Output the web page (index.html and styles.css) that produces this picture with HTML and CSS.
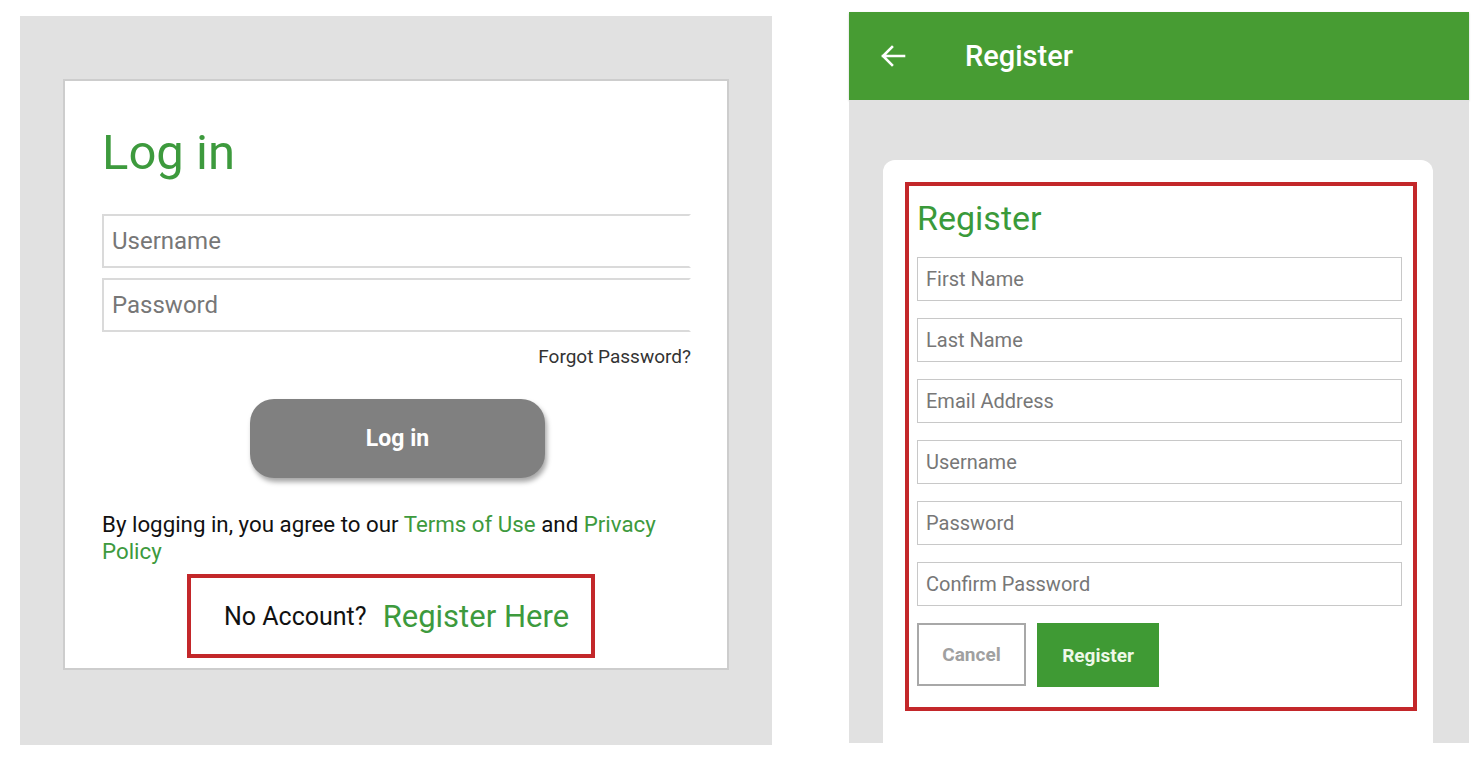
FILE: index.html
```html
<!DOCTYPE html>
<html lang="en">
<head>
<meta charset="utf-8">
<title>Log in / Register</title>
<link rel="stylesheet" href="styles.css">
</head>
<body>
<div class="page">
  <section class="login-panel">
    <div class="login-card">
      <h1 class="login-title">Log in</h1>
      <div class="login-fields">
        <div class="login-input">Username</div>
        <div class="login-input">Password</div>
      </div>
      <div class="forgot">Forgot Password?</div>
      <div class="login-btn-row"><div class="login-btn">Log in</div></div>
      <p class="terms">By logging in, you agree to our <span class="green">Terms of Use</span> and <span class="green">Privacy</span> <span class="green">Policy</span></p>
      <div class="no-account">
        <span class="no-account-q">No Account?</span>
        <span class="register-here">Register Here</span>
      </div>
    </div>
  </section>

  <section class="register-panel">
    <header class="appbar">
      <svg class="back" width="26" height="24" viewBox="0 0 26 24" aria-hidden="true">
        <path d="M24 12H3 M12 3 L3 12 L12 21" fill="none" stroke="#ffffff" stroke-width="2.6" stroke-linecap="square" stroke-linejoin="miter"/>
      </svg>
      <span class="appbar-title">Register</span>
    </header>
    <div class="register-body">
      <div class="register-card">
        <div class="register-box">
          <h2 class="register-title">Register</h2>
          <div class="reg-fields">
            <div class="reg-input">First Name</div>
            <div class="reg-input">Last Name</div>
            <div class="reg-input">Email Address</div>
            <div class="reg-input">Username</div>
            <div class="reg-input">Password</div>
            <div class="reg-input">Confirm Password</div>
          </div>
          <div class="reg-actions">
            <div class="btn-cancel">Cancel</div>
            <div class="btn-register">Register</div>
          </div>
        </div>
      </div>
    </div>
  </section>
</div>
</body>
</html>
```

FILE: styles.css
```css
* { box-sizing: border-box; }
html, body { margin: 0; padding: 0; background: #ffffff; }
body { font-family: Roboto, "Liberation Sans", sans-serif; color: #222; }

.page {
  display: flex;
  align-items: flex-start;
  width: 1482px;
  height: 768px;
}

/* ---------- Left: Log in ---------- */
.login-panel {
  margin: 16px 0 0 20px;
  width: 752px;
  height: 729px;
  background: #e1e1e1;
  padding: 63px 0 0 43px;
}
.login-card {
  width: 666px;
  height: 591px;
  background: #fff;
  border: 2px solid #cdcdcd;
  padding: 0 36px 0 37px;
  display: flex;
  flex-direction: column;
}
.login-title {
  margin: 42px 0 0 0;
  font-size: 49px;
  line-height: 60px;
  font-weight: 400;
  color: #3d9a3d;
}
.login-fields {
  margin-top: 31px;
  display: flex;
  flex-direction: column;
  gap: 10px;
}
.login-input {
  height: 54px;
  border: 2px solid #dadada;
  border-right-color: transparent;
  padding-left: 8px;
  display: flex;
  align-items: center;
  font-size: 24px;
  color: #777;
}
.forgot {
  margin-top: 15px;
  text-align: right;
  font-size: 19px;
  line-height: 20px;
  color: #333;
}
.login-btn-row {
  margin-top: 32px;
  display: flex;
  padding-left: 148px;
}
.login-btn {
  width: 295px;
  height: 79px;
  border-radius: 24px;
  background: #808080;
  box-shadow: 2px 4px 5px rgba(0,0,0,0.35);
  color: #fff;
  font-weight: 700;
  font-size: 23px;
  display: flex;
  align-items: center;
  justify-content: center;
}
.terms {
  margin: 33px 0 0 0;
  font-size: 22.3px;
  line-height: 27px;
  color: #111;
}
.green { color: #3d9a3d; }
.no-account {
  margin: 9px 0 0 85px;
  width: 408px;
  height: 84px;
  border: 4px solid #c3272a;
  display: flex;
  align-items: center;
  padding-left: 33px;
  gap: 16px;
}
.no-account-q { font-size: 25px; color: #111; }
.register-here { font-size: 31px; color: #3d9a3d; }

/* ---------- Right: Register ---------- */
.register-panel {
  margin: 12px 0 0 77px;
  width: 620px;
  height: 731px;
  display: flex;
  flex-direction: column;
}
.appbar {
  height: 88px;
  background: #479c33;
  display: flex;
  align-items: center;
  padding-left: 31px;
  box-shadow: 0 1px 2px rgba(0,0,0,0.2);
}
.back { display: block; }
.appbar-title {
  margin-left: 59px;
  color: #fff;
  font-size: 29px;
  font-weight: 500;
}
.register-body {
  flex: 1;
  background: #e1e1e1;
  padding: 60px 36px 0 34px;
  display: flex;
}
.register-card {
  flex: 1;
  background: #fff;
  border-radius: 12px 12px 0 0;
  padding: 22px 16px 0 22px;
}
.register-box {
  height: 529px;
  border: 4px solid #c3272a;
  padding: 12px 11px 0 8px;
}
.register-title {
  margin: 0;
  font-size: 34px;
  line-height: 40px;
  font-weight: 400;
  color: #3a9a3a;
}
.reg-fields {
  margin-top: 19px;
  display: flex;
  flex-direction: column;
  gap: 17px;
}
.reg-input {
  height: 44px;
  border: 1px solid #c8c8c8;
  padding-left: 8px;
  display: flex;
  align-items: center;
  font-size: 20px;
  color: #777;
}
.reg-actions {
  margin-top: 17px;
  display: flex;
  gap: 11px;
}
.btn-cancel {
  width: 109px;
  height: 63px;
  border: 2px solid #a8a8a8;
  color: #a0a0a0;
  font-weight: 700;
  font-size: 19px;
  display: flex;
  align-items: center;
  justify-content: center;
}
.btn-register {
  width: 122px;
  height: 64px;
  background: #3f9a34;
  color: #eef8e8;
  font-weight: 700;
  font-size: 19px;
  display: flex;
  align-items: center;
  justify-content: center;
}
```
